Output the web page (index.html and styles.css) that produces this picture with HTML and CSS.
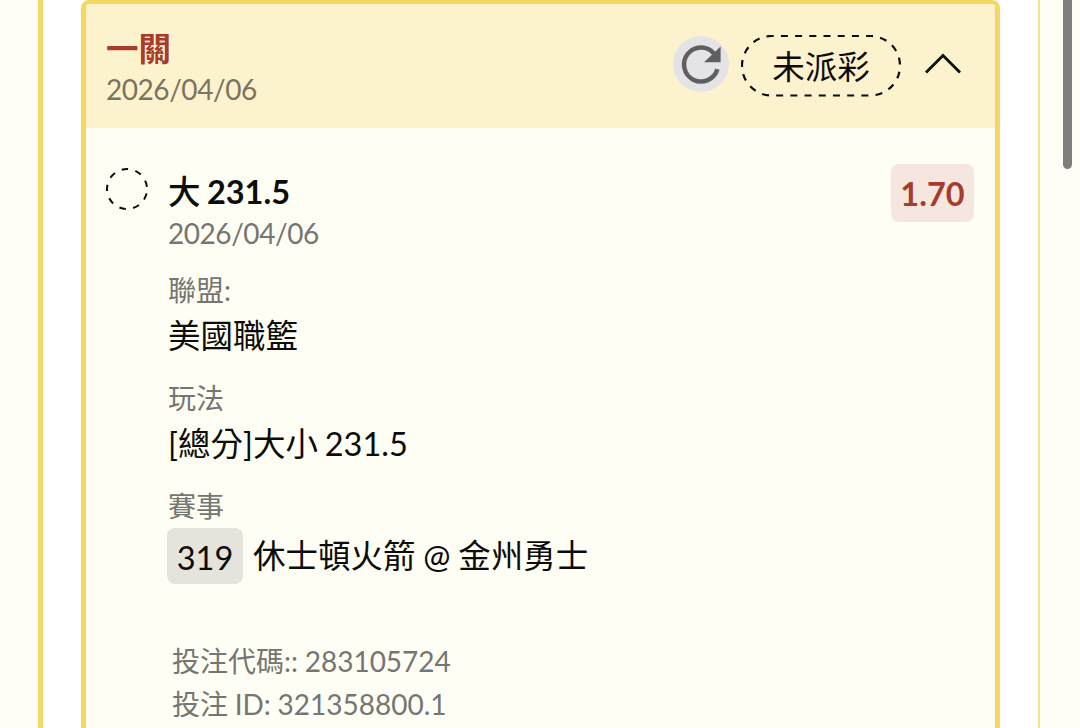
FILE: index.html
```
<!DOCTYPE html>
<html lang="zh-Hant">
<head>
    <meta charset="UTF-8">
    <title>投注紀錄</title>
    <link rel="stylesheet" href="styles.css">
</head>
<body>
<div class="main">
    <div class="panel">
        <div class="bet-card">
            <div class="bet-header">
                <div class="bet-title">
                    <div class="name">一關</div>
                    <div class="date">2026/04/06</div>
                </div>
                <div class="bet-actions">
                    <button class="refresh">
                        <svg width="56" height="56" viewBox="0 0 56 56">
                            <path d="M44.4 33.2A17 17 0 1 1 41 17.5" fill="none" stroke="#5f5f61" stroke-width="4.5"/>
                            <path d="M47.6 10.5V26.2H31z" fill="#5f5f61"/>
                        </svg>
                    </button>
                    <div class="status">
                        <svg class="status-line" width="160" height="62" viewBox="0 0 160 62">
                            <rect x="1" y="1" width="158" height="59.5" rx="29.7"/>
                        </svg>
                        <span>未派彩</span>
                    </div>
                    <svg class="arrow" width="38" height="24" viewBox="0 0 38 24">
                        <path d="M2 20.5L19 3.5L36 20.5"/>
                    </svg>
                </div>
            </div>
            <div class="bet-body">
                <svg class="pending" width="42" height="42" viewBox="0 0 42 42">
                    <circle cx="21" cy="21" r="20"/>
                </svg>
                <div class="bet-info">
                    <div class="pick"><span class="side">大</span> 231.5</div>
                    <div class="date">2026/04/06</div>
                    <div class="label">聯盟:</div>
                    <div class="value">美國職籃</div>
                    <div class="label">玩法</div>
                    <div class="value">[總分]大小 231.5</div>
                    <div class="label">賽事</div>
                    <div class="match">
                        <span class="match-no">319</span>
                        <span class="teams">休士頓火箭 @ 金州勇士</span>
                    </div>
                    <div class="codes">
                        <div>投注代碼:: 283105724</div>
                        <div>投注 ID: 321358800.1</div>
                    </div>
                </div>
                <div class="odds">1.70</div>
            </div>
        </div>
    </div>
    <div class="scroll-bar"></div>
</div>
</body>
</html>
```
FILE: styles.css
```
*{
    box-sizing: border-box;
}
body{
    margin: 0;
    background: #fffef6;
    font-family: Lato, "Noto Sans CJK TC", sans-serif;
    color: #0c0c0a;
    overflow: hidden;
}
.main{
    display: flex;
    justify-content: space-between;
    height: 728px;
    padding: 0 8px 0 38px;
    overflow: hidden;
}
.panel{
    width: 1002px;
    height: 728px;
    padding: 0 39px 0 38px;
    background: #ffffff;
    border-left: 5px solid #f3da6b;
    border-right: 2px solid #f5e290;
}
.bet-card{
    width: 919px;
    height: 760px;
    background: #fffef4;
    border: 5px solid #f3d961;
    border-top-width: 4px;
    border-radius: 8px;
    overflow: hidden;
}
.bet-header{
    display: flex;
    justify-content: space-between;
    height: 124px;
    padding: 25px 33px 0 20px;
    background: #fdf2ce;
}
.bet-title .name{
    height: 42px;
    line-height: 40px;
    font-size: 32.5px;
    font-weight: bold;
    color: #a83b2a;
}
.date{
    height: 36px;
    line-height: 36px;
    font-size: 28px;
    letter-spacing: -0.45px;
    color: #757571;
}
.bet-title .date{
    color: #7b735f;
}
.bet-actions{
    display: flex;
    align-items: flex-start;
}
.refresh{
    width: 56px;
    height: 56px;
    margin: 7px 12px 0 0;
    padding: 0;
    border: none;
    border-radius: 50%;
    background: #e4e4e6;
}
.refresh svg{
    display: block;
}
.status{
    position: relative;
    width: 160px;
    height: 62px;
    margin: 6px 23px 0 0;
    line-height: 63px;
    text-align: center;
    font-size: 32.5px;
}
.status-line{
    position: absolute;
    top: 0;
    left: 0;
    fill: none;
    stroke: #0c0c0a;
    stroke-width: 2.2;
    stroke-dasharray: 7 7.2;
    stroke-dashoffset: 5;
}
.arrow{
    margin-top: 23px;
    fill: none;
    stroke: #0c0c0a;
    stroke-width: 2.8;
}
.bet-body{
    display: flex;
    align-items: flex-start;
    padding: 36px 21px 0 20px;
}
.pending{
    margin: 4px 20px 0 0;
    fill: none;
    stroke: #0c0c0a;
    stroke-width: 2;
    stroke-dasharray: 6.5 7.463;
    stroke-dashoffset: -4.5;
}
.bet-info{
    flex: 1;
    word-spacing: -1.5px;
}
.pick{
    height: 51px;
    line-height: 56px;
    font-size: 32.5px;
    font-weight: bold;
}
.pick .side{
    font-family: "Noto Sans CJK TC", sans-serif;
    font-weight: 500;
    line-height: 1;
}
.label{
    height: 40px;
    margin-top: 20px;
    line-height: 38px;
    font-size: 28px;
    color: #757571;
}
.value{
    height: 48px;
    line-height: 49px;
    font-size: 32.5px;
}
.match{
    display: flex;
    align-items: center;
    height: 58px;
    font-size: 32.5px;
    word-spacing: -0.5px;
}
.match-no{
    width: 76px;
    height: 56px;
    margin: 0 10px 0 -1px;
    line-height: 60px;
    text-align: center;
    background: #e4e4dc;
    border-radius: 8px;
}
.teams{
    line-height: 56px;
}
.codes{
    margin: 55px 0 0 4px;
    line-height: 43px;
    font-size: 28px;
    word-spacing: -0.5px;
    color: #757571;
}
.odds{
    width: 83px;
    height: 58px;
    line-height: 60px;
    text-align: center;
    font-size: 32.5px;
    font-weight: bold;
    color: #a83b2f;
    background: #f5e7e0;
    border-radius: 8px;
}
.scroll-bar{
    width: 9px;
    height: 177px;
    margin-top: -8px;
    background: #7f7f7d;
    border-radius: 5px;
}
```
